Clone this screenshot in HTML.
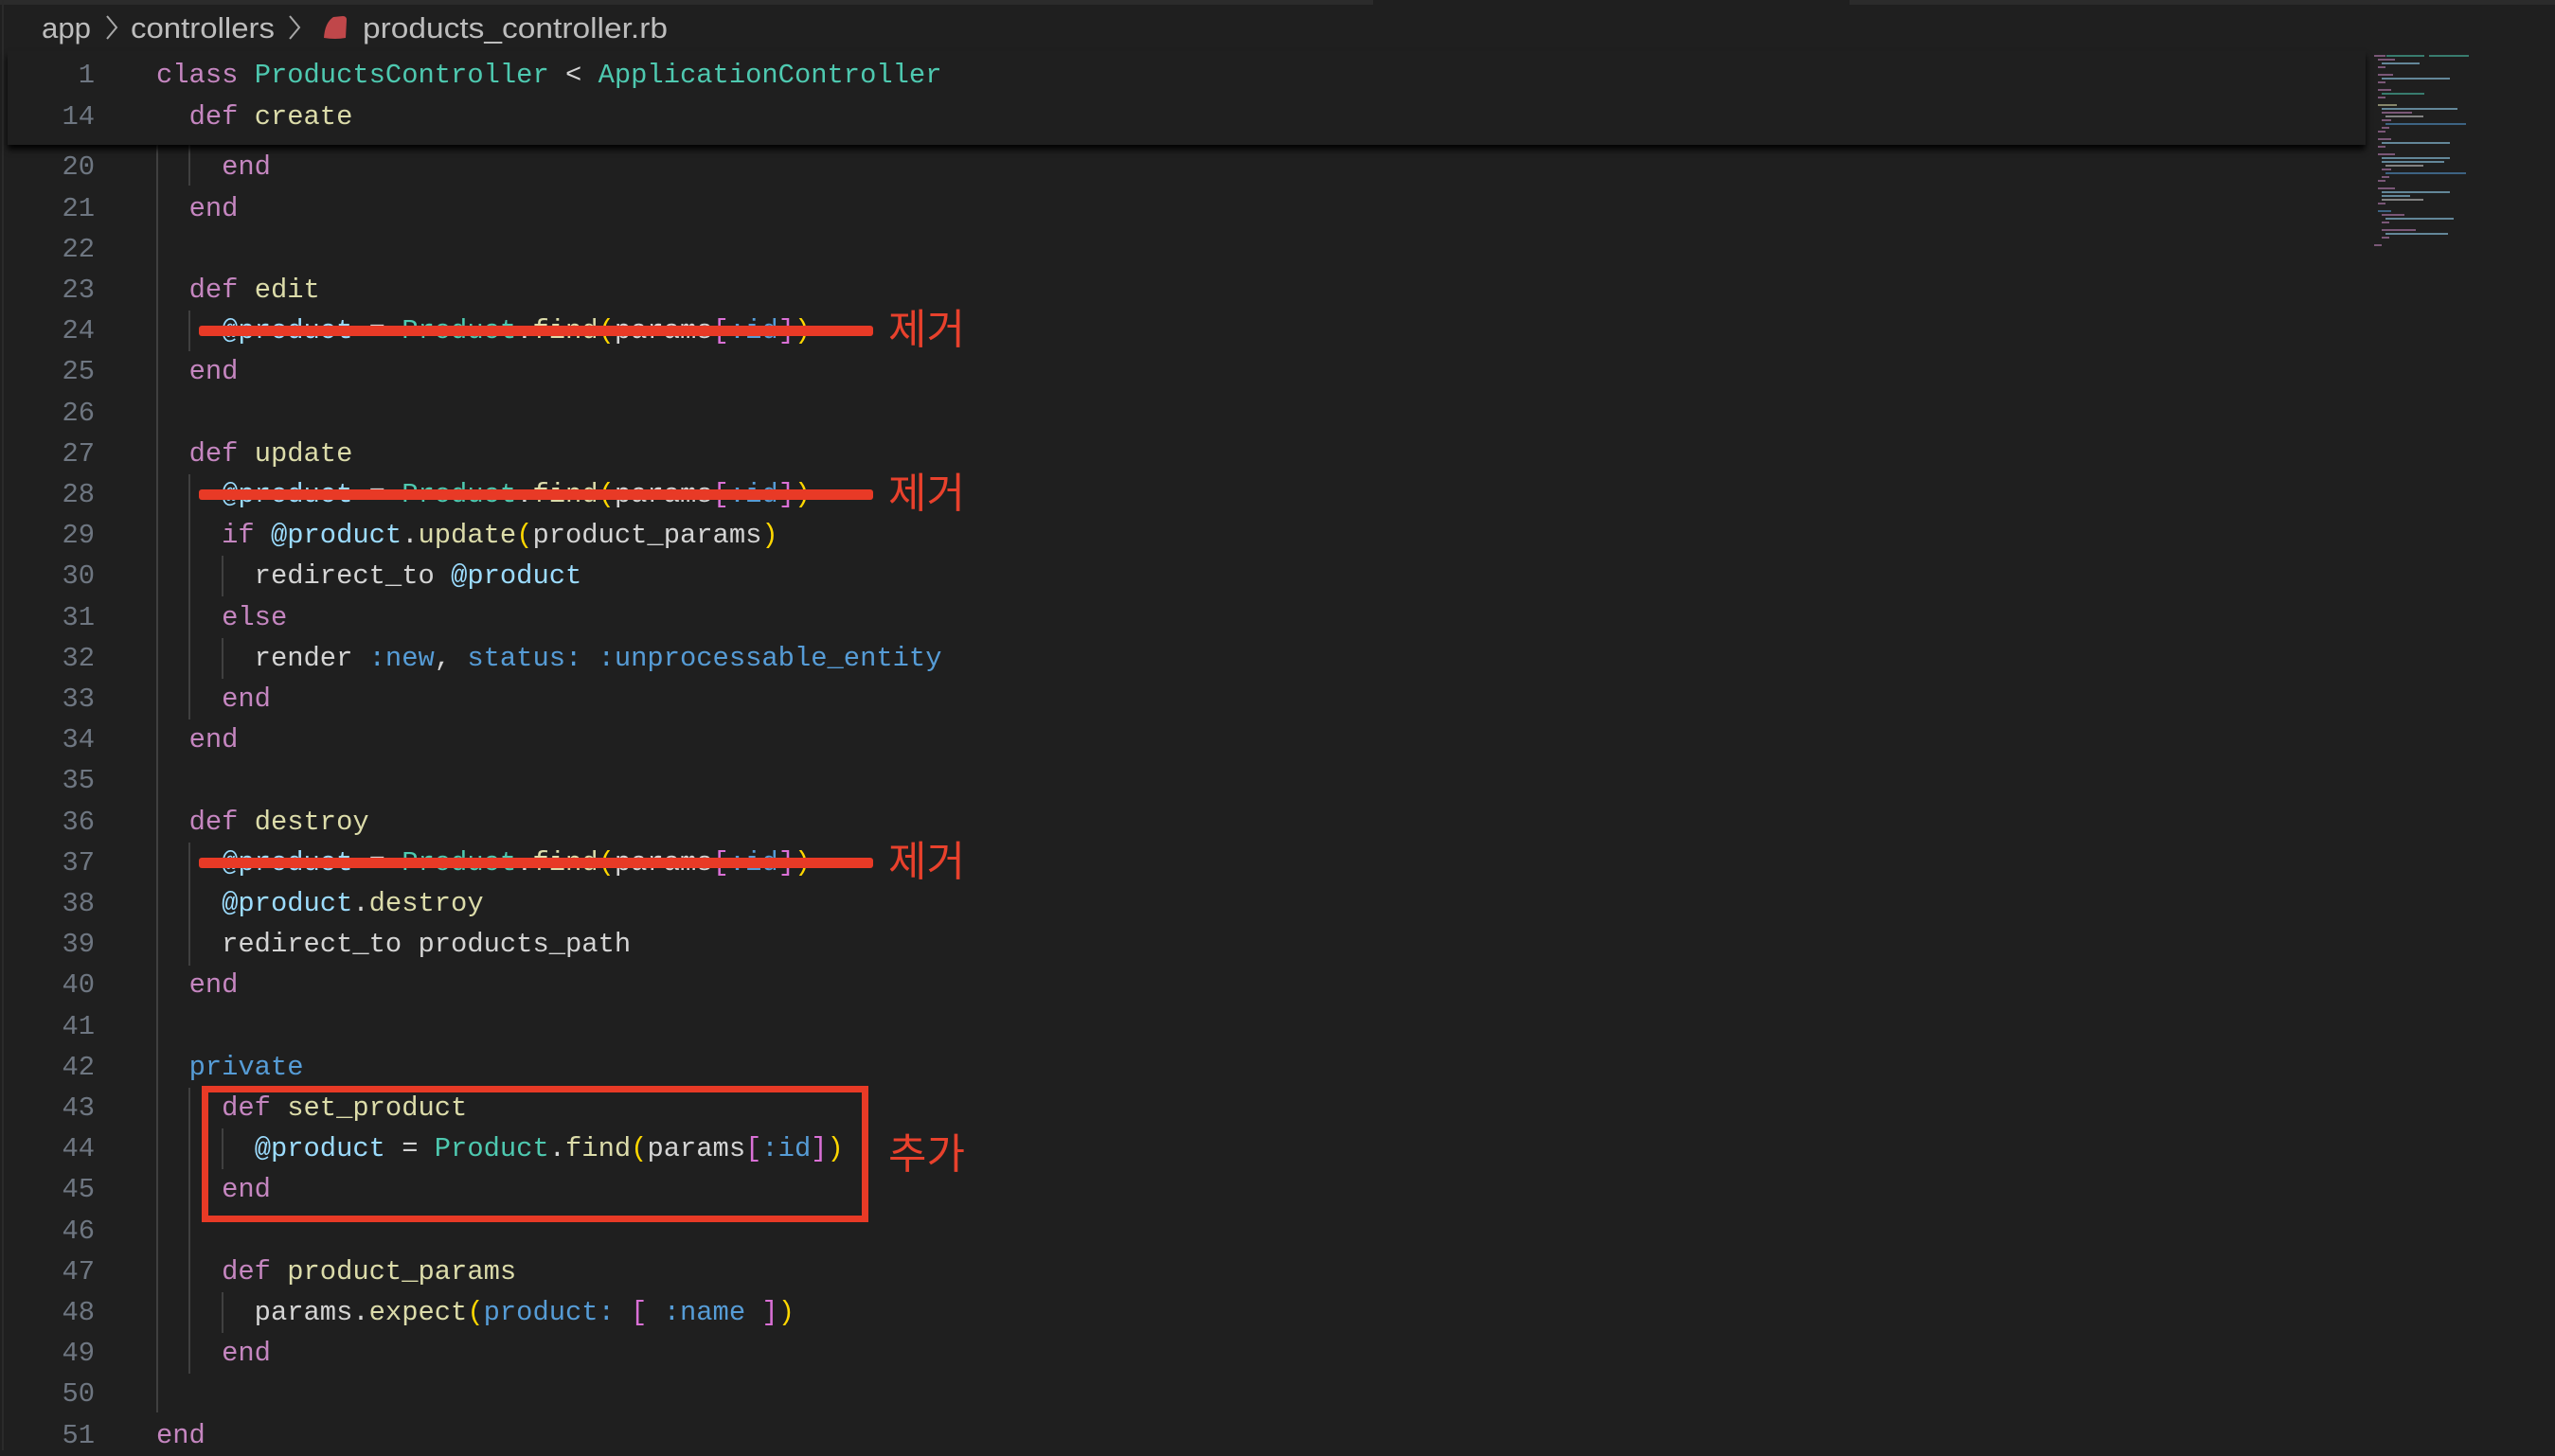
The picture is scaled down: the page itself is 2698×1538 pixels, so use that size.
<!DOCTYPE html>
<html><head><meta charset="utf-8">
<style>
html,body{margin:0;padding:0;}
body{width:2698px;height:1532px;background:#1f1f1f;position:relative;overflow:hidden;font-family:"Liberation Mono",monospace;}
.topstrip{position:absolute;top:0;height:5px;background:#2b2b2b;}
.hdr{position:absolute;left:8px;top:54px;width:2490px;height:99px;background:#1f1f1f;box-shadow:0 5px 6px rgba(0,0,0,0.9);z-index:5;}
.ln{position:absolute;left:0;width:100px;text-align:right;color:#6e7681;font-size:28.8px;line-height:43.2px;height:43.2px;}
.cd{position:absolute;left:165px;font-size:28.8px;line-height:43.2px;height:43.2px;white-space:pre;color:#d4d4d4;}
.k{color:#c586c0}.c{color:#4ec9b0}.f{color:#dcdcaa}.v{color:#9cdcfe}.s{color:#569cd6}.y{color:#ffd700}.p{color:#da70d6}.b{color:#179fff}
.g{position:absolute;width:2px;background:#404040;}
.strike{position:absolute;left:210px;width:712px;height:11px;background:#e83a26;border-radius:3px;z-index:3;}
.note{position:absolute;left:938px;font-family:"Liberation Sans","Noto Sans CJK KR",sans-serif;font-size:44px;color:#e8412c;line-height:50px;}
.box{position:absolute;left:213px;top:1144px;width:690px;height:130px;border:7px solid #e83a26;z-index:3;}
.mm{position:absolute;height:2px;}
#code{position:absolute;left:0;top:3px;width:2698px;height:1532px;}
</style></head><body>
<div class="topstrip" style="left:0;width:1450px"></div>
<div class="topstrip" style="left:1953px;width:745px"></div>
<div style="position:absolute;left:2px;top:0;width:2px;height:1532px;background:#2a2a2a"></div>
<svg style="position:absolute;left:0;top:0" width="760" height="54" viewBox="0 0 760 54">
 <g font-family="Liberation Sans, sans-serif" font-size="31" fill="#bdbdbd">
  <text x="44" y="40" textLength="52" lengthAdjust="spacingAndGlyphs">app</text>
  <text x="138" y="40" textLength="152" lengthAdjust="spacingAndGlyphs">controllers</text>
  <text x="383" y="40" textLength="322" lengthAdjust="spacingAndGlyphs">products_controller.rb</text>
 </g>
 <path d="M113 17 L123 29 L113 41" stroke="#a8a8a8" stroke-width="2" fill="none"/>
 <path d="M306 17 L316 29 L306 41" stroke="#a8a8a8" stroke-width="2" fill="none"/>
 <path d="M342 40 Q343 24 352 18 L362 17 Q366 17 366 21 L365 40 Q354 42 342 40Z" fill="#c0474a"/>
</svg>

<div class="hdr">
 <div class="ln" style="top:4.4px;left:-8px">1</div>
 <div class="cd" style="top:4.4px;left:157px"><span class="k">class</span> <span class="c">ProductsController</span> &lt; <span class="c">ApplicationController</span></div>
 <div class="ln" style="top:47.6px;left:-8px">14</div>
 <div class="cd" style="top:47.6px;left:157px">  <span class="k">def</span> <span class="f">create</span></div>
</div>

<div id="code">
<div class="g" style="left:165px;top:149px;height:1340px"></div>
<div class="g" style="left:199px;top:149px;height:44px"></div>
<div class="g" style="left:199px;top:325px;height:43px"></div>
<div class="g" style="left:199px;top:498px;height:259px"></div>
<div class="g" style="left:199px;top:887px;height:130px"></div>
<div class="g" style="left:199px;top:1146px;height:302px"></div>
<div class="g" style="left:234px;top:584px;height:43px"></div>
<div class="g" style="left:234px;top:671px;height:43px"></div>
<div class="g" style="left:234px;top:1189px;height:43px"></div>
<div class="g" style="left:234px;top:1362px;height:43px"></div>

<div class="ln" style="top:152.4px">20</div><div class="cd" style="top:152.4px">    <span class="k">end</span></div>
<div class="ln" style="top:195.6px">21</div><div class="cd" style="top:195.6px">  <span class="k">end</span></div>
<div class="ln" style="top:238.8px">22</div>
<div class="ln" style="top:282px">23</div><div class="cd" style="top:282px">  <span class="k">def</span> <span class="f">edit</span></div>
<div class="ln" style="top:325.2px">24</div><div class="cd" style="top:325.2px">    <span class="v">@product</span> = <span class="c">Product</span>.<span class="f">find</span><span class="y">(</span>params<span class="p">[</span><span class="s">:id</span><span class="p">]</span><span class="y">)</span></div>
<div class="ln" style="top:368.4px">25</div><div class="cd" style="top:368.4px">  <span class="k">end</span></div>
<div class="ln" style="top:411.6px">26</div>
<div class="ln" style="top:454.8px">27</div><div class="cd" style="top:454.8px">  <span class="k">def</span> <span class="f">update</span></div>
<div class="ln" style="top:498px">28</div><div class="cd" style="top:498px">    <span class="v">@product</span> = <span class="c">Product</span>.<span class="f">find</span><span class="y">(</span>params<span class="p">[</span><span class="s">:id</span><span class="p">]</span><span class="y">)</span></div>
<div class="ln" style="top:541.2px">29</div><div class="cd" style="top:541.2px">    <span class="k">if</span> <span class="v">@product</span>.<span class="f">update</span><span class="y">(</span>product_params<span class="y">)</span></div>
<div class="ln" style="top:584.4px">30</div><div class="cd" style="top:584.4px">      redirect_to <span class="v">@product</span></div>
<div class="ln" style="top:627.6px">31</div><div class="cd" style="top:627.6px">    <span class="k">else</span></div>
<div class="ln" style="top:670.8px">32</div><div class="cd" style="top:670.8px">      render <span class="s">:new</span>, <span class="s">status:</span> <span class="s">:unprocessable_entity</span></div>
<div class="ln" style="top:714px">33</div><div class="cd" style="top:714px">    <span class="k">end</span></div>
<div class="ln" style="top:757.2px">34</div><div class="cd" style="top:757.2px">  <span class="k">end</span></div>
<div class="ln" style="top:800.4px">35</div>
<div class="ln" style="top:843.6px">36</div><div class="cd" style="top:843.6px">  <span class="k">def</span> <span class="f">destroy</span></div>
<div class="ln" style="top:886.8px">37</div><div class="cd" style="top:886.8px">    <span class="v">@product</span> = <span class="c">Product</span>.<span class="f">find</span><span class="y">(</span>params<span class="p">[</span><span class="s">:id</span><span class="p">]</span><span class="y">)</span></div>
<div class="ln" style="top:930px">38</div><div class="cd" style="top:930px">    <span class="v">@product</span>.<span class="f">destroy</span></div>
<div class="ln" style="top:973.2px">39</div><div class="cd" style="top:973.2px">    redirect_to products_path</div>
<div class="ln" style="top:1016.4px">40</div><div class="cd" style="top:1016.4px">  <span class="k">end</span></div>
<div class="ln" style="top:1059.6px">41</div>
<div class="ln" style="top:1102.8px">42</div><div class="cd" style="top:1102.8px">  <span class="s">private</span></div>
<div class="ln" style="top:1146px">43</div><div class="cd" style="top:1146px">    <span class="k">def</span> <span class="f">set_product</span></div>
<div class="ln" style="top:1189.2px">44</div><div class="cd" style="top:1189.2px">      <span class="v">@product</span> = <span class="c">Product</span>.<span class="f">find</span><span class="y">(</span>params<span class="p">[</span><span class="s">:id</span><span class="p">]</span><span class="y">)</span></div>
<div class="ln" style="top:1232.4px">45</div><div class="cd" style="top:1232.4px">    <span class="k">end</span></div>
<div class="ln" style="top:1275.6px">46</div>
<div class="ln" style="top:1318.8px">47</div><div class="cd" style="top:1318.8px">    <span class="k">def</span> <span class="f">product_params</span></div>
<div class="ln" style="top:1362px">48</div><div class="cd" style="top:1362px">      params.<span class="f">expect</span><span class="y">(</span><span class="s">product:</span> <span class="p">[</span> <span class="s">:name</span> <span class="p">]</span><span class="y">)</span></div>
<div class="ln" style="top:1405.2px">49</div><div class="cd" style="top:1405.2px">    <span class="k">end</span></div>
<div class="ln" style="top:1448.4px">50</div>
<div class="ln" style="top:1491.6px">51</div><div class="cd" style="top:1491.6px"><span class="k">end</span></div>

<div class="strike" style="top:341px"></div>
<div class="strike" style="top:514px"></div>
<div class="strike" style="top:903px"></div>
<div class="note" style="top:321px">제거</div>
<div class="note" style="top:494px">제거</div>
<div class="note" style="top:883px">제거</div>
<div class="box"></div>
<div class="note" style="top:1192px">추가</div>
</div>

<div style="position:absolute;left:2507px;top:58px;width:100px;height:200px;opacity:0.55">
<div class="mm" style="top:0;left:0;width:12px;background:#c586c0"></div><div class="mm" style="top:0;left:13px;width:40px;background:#4ec9b0"></div><div class="mm" style="top:0;left:58px;width:42px;background:#4ec9b0"></div>
<div class="mm" style="top:4px;left:4px;width:18px;background:#c586c0"></div>
<div class="mm" style="top:8px;left:8px;width:40px;background:#9cdcfe"></div>
<div class="mm" style="top:12px;left:4px;width:8px;background:#c586c0"></div>
<div class="mm" style="top:20px;left:4px;width:16px;background:#c586c0"></div>
<div class="mm" style="top:24px;left:8px;width:72px;background:#9cdcfe"></div>
<div class="mm" style="top:28px;left:4px;width:8px;background:#c586c0"></div>
<div class="mm" style="top:36px;left:4px;width:14px;background:#c586c0"></div>
<div class="mm" style="top:40px;left:8px;width:45px;background:#4ec9b0"></div>
<div class="mm" style="top:44px;left:4px;width:8px;background:#c586c0"></div>
<div class="mm" style="top:52px;left:4px;width:20px;background:#dcdcaa"></div>
<div class="mm" style="top:56px;left:8px;width:80px;background:#9cdcfe"></div>
<div class="mm" style="top:60px;left:8px;width:32px;background:#c586c0"></div>
<div class="mm" style="top:64px;left:12px;width:40px;background:#d4d4d4"></div>
<div class="mm" style="top:68px;left:8px;width:10px;background:#c586c0"></div>
<div class="mm" style="top:72px;left:12px;width:85px;background:#569cd6"></div>
<div class="mm" style="top:76px;left:8px;width:8px;background:#c586c0"></div>
<div class="mm" style="top:80px;left:4px;width:8px;background:#c586c0"></div>
<div class="mm" style="top:88px;left:4px;width:14px;background:#c586c0"></div>
<div class="mm" style="top:92px;left:8px;width:72px;background:#9cdcfe"></div>
<div class="mm" style="top:96px;left:4px;width:8px;background:#c586c0"></div>
<div class="mm" style="top:104px;left:4px;width:18px;background:#c586c0"></div>
<div class="mm" style="top:108px;left:8px;width:72px;background:#9cdcfe"></div>
<div class="mm" style="top:112px;left:8px;width:66px;background:#9cdcfe"></div>
<div class="mm" style="top:116px;left:12px;width:40px;background:#d4d4d4"></div>
<div class="mm" style="top:120px;left:8px;width:10px;background:#c586c0"></div>
<div class="mm" style="top:124px;left:12px;width:85px;background:#569cd6"></div>
<div class="mm" style="top:128px;left:8px;width:8px;background:#c586c0"></div>
<div class="mm" style="top:132px;left:4px;width:8px;background:#c586c0"></div>
<div class="mm" style="top:140px;left:4px;width:18px;background:#c586c0"></div>
<div class="mm" style="top:144px;left:8px;width:72px;background:#9cdcfe"></div>
<div class="mm" style="top:148px;left:8px;width:30px;background:#9cdcfe"></div>
<div class="mm" style="top:152px;left:8px;width:44px;background:#d4d4d4"></div>
<div class="mm" style="top:156px;left:4px;width:8px;background:#c586c0"></div>
<div class="mm" style="top:164px;left:4px;width:14px;background:#569cd6"></div>
<div class="mm" style="top:168px;left:8px;width:24px;background:#c586c0"></div>
<div class="mm" style="top:172px;left:12px;width:72px;background:#9cdcfe"></div>
<div class="mm" style="top:176px;left:8px;width:8px;background:#c586c0"></div>
<div class="mm" style="top:184px;left:8px;width:36px;background:#c586c0"></div>
<div class="mm" style="top:188px;left:12px;width:66px;background:#9cdcfe"></div>
<div class="mm" style="top:192px;left:8px;width:8px;background:#c586c0"></div>
<div class="mm" style="top:200px;left:0;width:8px;background:#c586c0"></div>
</div>
</body></html>
